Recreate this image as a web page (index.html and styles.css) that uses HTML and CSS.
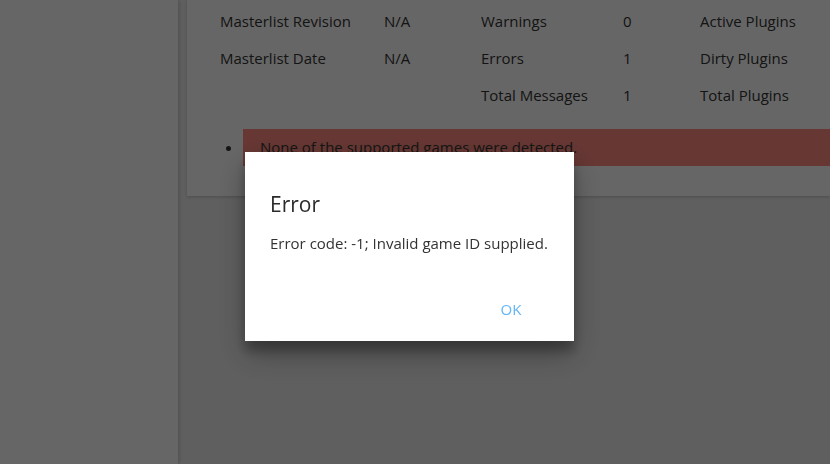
FILE: index.html
```html
<!DOCTYPE html>
<html lang="en">
<head>
    <meta charset="UTF-8">
    <meta name="viewport" content="width=device-width, initial-scale=1.0">
    <title>LOOT</title>
    <link rel="stylesheet" href="styles.css">
</head>
<body>
<div class="app">
    <div class="sidebar"></div>
    <div class="main">
        <div class="card">
            <table class="summary">
                <tr>
                    <td class="c1">Masterlist Revision</td>
                    <td class="c2">N/A</td>
                    <td class="c3">Warnings</td>
                    <td class="c4">0</td>
                    <td>Active Plugins</td>
                </tr>
                <tr>
                    <td class="c1">Masterlist Date</td>
                    <td class="c2">N/A</td>
                    <td class="c3">Errors</td>
                    <td class="c4">1</td>
                    <td>Dirty Plugins</td>
                </tr>
                <tr>
                    <td class="c1"></td>
                    <td class="c2"></td>
                    <td class="c3">Total Messages</td>
                    <td class="c4">1</td>
                    <td>Total Plugins</td>
                </tr>
            </table>
            <ul class="messages">
                <li class="error">None of the supported games were detected.</li>
            </ul>
        </div>
    </div>
</div>

<div class="overlay">
    <div class="dialog">
        <h2 class="dialog-title">Error</h2>
        <p class="dialog-text">Error code: -1; Invalid game ID supplied.</p>
        <div class="dialog-actions">
            <button class="btn-ok">OK</button>
        </div>
    </div>
</div>
</body>
</html>
```

FILE: styles.css
```css
body {
    margin: 0;
    font-family: "Open Sans", "Noto Sans", sans-serif;
    font-size: 15px;
    color: #333333;
    overflow: hidden;
}

.app {
    display: flex;
    height: 464px;
    background-color: #eeeeee;
}

.sidebar {
    width: 178px;
    flex-shrink: 0;
    background-color: #ffffff;
    box-shadow: 1px 0 4px rgba(0, 0, 0, 0.18);
    z-index: 1;
}

.main {
    flex: 1;
    padding-left: 9px;
}

.card {
    background-color: #ffffff;
    padding: 2px 0 30px 0;
    box-shadow: 0 1px 3px rgba(0, 0, 0, 0.2);
}

.summary {
    border-collapse: collapse;
    margin-left: 33px;
}

.summary td {
    height: 37px;
    padding: 0;
    white-space: nowrap;
}

.c1 { width: 164px; }
.c2 { width: 97px; }
.c3 { width: 142px; }
.c4 { width: 77px; }

.messages {
    margin: 16px 0 0 0;
    padding-left: 56px;
}

.error {
    background-color: #ff8a80;
    height: 37px;
    line-height: 37px;
    padding-left: 17px;
    color: #333333;
}

.overlay {
    position: fixed;
    top: 0;
    left: 0;
    right: 0;
    bottom: 0;
    z-index: 10;
    background-color: rgba(0, 0, 0, 0.6);
}

.dialog {
    position: absolute;
    left: 245px;
    top: 152px;
    width: 329px;
    height: 189px;
    box-sizing: border-box;
    background-color: #ffffff;
    padding: 37px 0 0 25px;
    box-shadow: 0 14px 28px rgba(0, 0, 0, 0.3), 0 10px 10px rgba(0, 0, 0, 0.25);
    display: flex;
    flex-direction: column;
}

.dialog-title {
    margin: 0;
    font-size: 21px;
    font-weight: normal;
    color: #2a2a2a;
    line-height: 30px;
}

.dialog-text {
    margin: 12px 0 0 0;
    font-size: 15px;
    line-height: 24px;
    color: #333333;
}

.dialog-actions {
    display: flex;
    justify-content: flex-end;
    padding: 0 19px 0 0;
    margin-top: 36px;
}

.btn-ok {
    font-family: inherit;
    font-size: 15px;
    color: #64b5f6;
    background: none;
    border: none;
    width: 88px;
    height: 36px;
    padding: 0;
}
```
